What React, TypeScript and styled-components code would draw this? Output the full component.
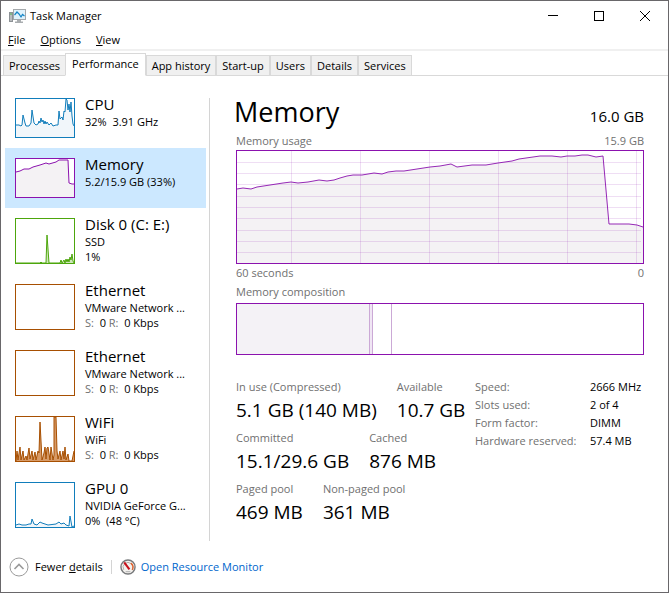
import React from 'react';
import styled, { createGlobalStyle } from 'styled-components';

const GlobalStyle = createGlobalStyle`
  *, *::before, *::after { box-sizing: border-box; }
  body {
    margin: 0;
    background: #fff;
    color: #000;
    font-family: 'Open Sans', 'Noto Sans', sans-serif;
    font-size: 11px;
    line-height: 16px;
  }
  button {
    font: inherit;
    color: inherit;
    border: 0;
    padding: 0;
    background: none;
    text-align: left;
  }
`;

const PURPLE = '#8b12ae';
const BLUE = '#117dbb';
const GREEN = '#4da60c';
const BROWN = '#a74f01';

const Window = styled.div`
  display: flex;
  flex-direction: column;
  min-height: 100vh;
  border: 1px solid #69676a;
`;

const TitleBar = styled.header`
  display: flex;
  align-items: center;
  height: 30px;
  padding-left: 8px;
`;

const Title = styled.h1`
  flex: 1;
  margin: 0 0 0 4px;
  font-size: 11px;
  font-weight: 400;
`;

const CaptionButton = styled.button`
  display: grid;
  place-items: center;
  width: 46px;
  height: 30px;
  &:hover { background: #e5e5e5; }
`;

const MenuBar = styled.nav`
  display: flex;
  gap: 15px;
  height: 20px;
  padding-left: 7px;
  border-bottom: 2px solid #f0f0f0;
`;

const MenuItem = styled.button`
  line-height: 18px;
`;

const TabStrip = styled.div`
  display: flex;
  align-items: flex-end;
  height: 25px;
  padding-left: 2px;
  box-shadow: inset 0 -1px #d9d9d9;
`;

const Tab = styled.button<{ $active?: boolean }>`
  height: ${p => (p.$active ? 23 : 21)}px;
  margin: ${p => (p.$active ? '0 0 0 -1px' : '0')};
  padding: ${p => (p.$active ? '0 6px 2px' : '0 5px')};
  border: 1px solid #d9d9d9;
  border-bottom-color: ${p => (p.$active ? '#fff' : '#d9d9d9')};
  background: ${p => (p.$active ? '#fff' : '#f0f0f0')};
  white-space: nowrap;
  & + & { border-left-width: ${p => (p.$active ? 1 : 0)}px; }
`;

const Body = styled.div`
  display: flex;
  flex: 1;
  padding: 12px 24px 0 4px;
`;

const Sidebar = styled.nav`
  flex: none;
  width: 201px;
`;

const Divider = styled.div`
  flex: none;
  width: 1px;
  margin: 10px 26px 0 3px;
  background: #d4d4d4;
`;

const Resource = styled.button<{ $active?: boolean }>`
  display: flex;
  gap: 10px;
  width: 100%;
  padding: 10px;
  background: ${p => (p.$active ? '#cce8ff' : 'transparent')};
`;

const Thumb = styled.svg<{ $color: string; $tall?: boolean }>`
  flex: none;
  width: 60px;
  height: ${p => (p.$tall ? 46 : 40)}px;
  border: 1px solid ${p => p.$color};
  background: #fff;
`;

const ResourceText = styled.span`
  display: block;
  min-width: 0;
  margin-top: -4px;
`;

const ResourceName = styled.span`
  display: block;
  font-size: 15px;
  line-height: 20px;
`;

const ResourceLine = styled.span`
  display: block;
  line-height: 15px;
  white-space: pre;
`;

const Muted = styled.span`
  color: #707070;
`;

const Main = styled.main`
  flex: 1;
  min-width: 0;
`;

const Heading = styled.div`
  display: flex;
  justify-content: space-between;
  align-items: baseline;
  height: 45px;
`;

const HeadingName = styled.h2`
  margin: 0 0 0 -2px;
  font-size: 27px;
  font-weight: 400;
  line-height: 48px;
`;

const Capacity = styled.span`
  font-size: 15px;
  line-height: 20px;
`;

const Caption = styled.div`
  display: flex;
  justify-content: space-between;
  height: 17px;
  color: #707070;
`;

const CompositionCaption = styled(Caption)`
  height: 19px;
  margin-top: 2px;
`;

const UsageChart = styled.svg`
  display: block;
  width: 100%;
  height: 114px;
  margin-bottom: 1px;
  border: 1px solid ${PURPLE};
`;

const Composition = styled.div`
  display: flex;
  height: 52px;
  border: 1px solid ${PURPLE};
`;

const Segment = styled.div<{ $share: number; $fill?: string }>`
  flex: ${p => p.$share} 0 0;
  background: ${p => p.$fill ?? '#fff'};
  & + & { border-left: 1px solid #cba9d6; }
`;

const Details = styled.div`
  display: flex;
  justify-content: space-between;
  padding-top: 24px;
`;

const StatRow = styled.dl`
  display: flex;
  gap: 20px;
  height: 51px;
  margin: 0;
  white-space: nowrap;
`;

const StatLabel = styled.dt`
  color: #707070;
`;

const StatValue = styled.dd`
  margin: 0;
  font-size: 19px;
  line-height: 30px;
`;

const Specs = styled.table`
  align-self: flex-start;
  width: 169px;
  border-collapse: collapse;
  white-space: nowrap;
  line-height: 18px;
  margin-top: -1px;
  th, td { padding: 0; text-align: left; font-weight: 400; }
  th { width: 115px; color: #707070; }
`;

const Footer = styled.footer`
  display: flex;
  align-items: center;
  height: 51px;
  padding: 1px 0 0 8px;
`;

const FooterButton = styled.button`
  display: flex;
  align-items: center;
  gap: 6px;
`;

const FooterRule = styled.span`
  width: 1px;
  height: 14px;
  margin: 0 8px;
  background: #d4d4d4;
`;

const FooterLink = styled.a`
  display: flex;
  align-items: center;
  gap: 5px;
  color: #0066cc;
  text-decoration: none;
`;

const TaskManagerIcon = () => (
  <svg width="17" height="16" viewBox="0 0 17 16" aria-hidden="true">
    <rect x="0.5" y="4.5" width="3" height="9" fill="#b9bcbf" stroke="#8d9296" />
    <path d="M1 6h2" stroke="#4caf50" />
    <path d="M8 12h4v1.500h2V15H6v-1.500h2z" fill="#a9adb0" />
    <rect x="4.500" y="1.500" width="12" height="10" fill="#dff2fc" stroke="#a4a8ab" />
    <path d="M5.500 7l2.500-3 2 2 2 3 1.500-2.500L15.500 8" fill="none" stroke="#1384c5" strokeWidth="1.200" />
  </svg>
);

const GaugeIcon = () => (
  <svg width="16" height="16" viewBox="0 0 17 17" aria-hidden="true">
    <circle cx="8.500" cy="8.500" r="7.500" fill="#f3f1ee" stroke="#77797b" strokeWidth="1.500" />
    <path d="M4 11.500A5.200 5.200 0 1 1 13 11.500" fill="none" stroke="#b0aaa5" />
    <path d="M11.500 4.300A5.200 5.200 0 0 1 13 11.500" fill="none" stroke="#e2602b" strokeWidth="1.500" />
    <path d="M4.500 3.500l5.500 7.500" stroke="#c8101a" strokeWidth="2.200" />
    <path d="M6 13.500h5" stroke="#aaa" />
  </svg>
);

const ChevronIcon = () => (
  <svg width="20" height="20" viewBox="0 0 20 20" fill="none" aria-hidden="true">
    <circle cx="10" cy="10" r="9" stroke="#9a9a9a" />
    <path d="M5.500 12L10 7.500l4.500 4.500" stroke="#9a9a9a" strokeWidth="1.600" />
  </svg>
);

type ResourceItem = {
  name: string;
  lines: React.ReactNode[];
  color: string;
  points?: string;
  fill?: string;
  tall?: boolean;
  active?: boolean;
};

const network = <><Muted>S:</Muted>{'  0 '}<Muted>R:</Muted>{'  0 Kbps'}</>;

const resources: ResourceItem[] = [
  {
    name: 'CPU', lines: ['32%  3.91 GHz'], color: BLUE, fill: '#f1f6fa',
    points: '0,26 3,26 5,27 6,26 7,16 9,24 10,27 13,27 15,24 16,11 18,24 20,26 22,25 23,22 24,24 25,19 26,23 27,21 28,25 29,22 30,25 31,23 33,26 35,24 37,27 40,26 42,26 43,12 44,20 46,18 47,21 48,12 49,13 50,0 51,1 52,11 53,5 54,13 55,3 56,17 57,25 58,27',
  },
  {
    name: 'Memory', lines: ['5.2/15.9 GB (33%)'], color: PURPLE, fill: '#f4f2f4', active: true,
    points: '0,13 4,12 8,10 13,10 17,8 24,6 30,4 33,5 40,3 43,1 52,1 53,24 56,25 58,25',
  },
  {
    name: 'Disk 0 (C: E:)', lines: ['SSD', '1%'], color: GREEN, fill: '#cfe6bb', tall: true,
    points: '0,44 24,44 25,43 26,44 30,44 31,16 33,44 44,44 45,41 46,44 48,41 49,44 50,40 51,43 52,40 53,43 54,38 55,41 56,35 57,42 58,44',
  },
  { name: 'Ethernet', lines: ['VMware Network ...', network], color: BROWN, tall: true },
  { name: 'Ethernet', lines: ['VMware Network ...', network], color: BROWN, tall: true },
  {
    name: 'WiFi', lines: ['WiFi', network], color: BROWN, fill: '#d79b68', tall: true,
    points: '0,44 1,34 2,43 4,30 5,43 7,34 8,43 10,39 11,43 13,31 14,42 16,34 17,43 19,35 20,43 22,34 23,36 24,5 26,43 28,36 29,30 30,42 31,31 32,30 34,43 35,30 37,43 38,38 38,0 40,0 41,34 42,42 44,34 45,43 47,34 48,42 49,30 50,43 52,37 53,44 56,44 58,34',
  },
  {
    name: 'GPU 0', lines: ['NVIDIA GeForce G...', '0%  (48 °C)'], color: BLUE, fill: '#f1f6fa', tall: true,
    points: '0,42 3,41 6,42 10,42 13,41 15,41 16,36 18,41 21,42 24,39 26,40 29,41 32,42 40,41 43,39 45,41 48,40 50,42 53,43 54,33 56,44 58,43',
  },
];

const usage =
  '0,38 6,37 14,38 20,36 33,34 46,32 54,31 61,32 71,31 82,29 90,30 97,29 103,27 110,25 116,24 125,24 137,22 145,23 151,21 159,20 167,20 180,18 193,16 203,15 214,13 220,16 235,14 249,14 261,12 275,10 282,8 303,5 315,5 324,6 330,5 338,5 345,4 351,4 359,6 366,5 372,73 392,73 400,74 406,76';

const stats = [
  [['In use (Compressed)', '5.1 GB (140 MB)'], ['Available', '10.7 GB']],
  [['Committed', '15.1/29.6 GB'], ['Cached', '876 MB']],
  [['Paged pool', '469 MB'], ['Non-paged pool', '361 MB']],
];

const specs = [
  ['Speed:', '2666 MHz'],
  ['Slots used:', '2 of 4'],
  ['Form factor:', 'DIMM'],
  ['Hardware reserved:', '57.4 MB'],
];

const tabs = ['Processes', 'Performance', 'App history', 'Start-up', 'Users', 'Details', 'Services'];

const ResourceButton = ({ item }: { item: ResourceItem }) => {
  const height = item.tall ? 44 : 38;
  return (
    <Resource $active={item.active} aria-current={item.active}>
      <Thumb $color={item.color} $tall={item.tall} viewBox={`0 0 58 ${height}`} aria-hidden="true">
        {item.points && (
          <>
            <polygon points={`0,${height} ${item.points} 58,${height}`} fill={item.fill} />
            <polyline points={item.points} fill="none" stroke={item.color} />
          </>
        )}
      </Thumb>
      <ResourceText>
        <ResourceName>{item.name}</ResourceName>
        {item.lines.map((line, i) => <ResourceLine key={i}>{line}</ResourceLine>)}
      </ResourceText>
    </Resource>
  );
};

export default function App() {
  return (
    <>
      <GlobalStyle />
      <Window>
        <TitleBar>
          <TaskManagerIcon />
          <Title>Task Manager</Title>
          <CaptionButton aria-label="Minimise">
            <svg width="10" height="10"><path d="M0 4.500h10" stroke="#000" /></svg>
          </CaptionButton>
          <CaptionButton aria-label="Maximise">
            <svg width="10" height="10"><rect x=".5" y=".5" width="9" height="9" fill="none" stroke="#000" /></svg>
          </CaptionButton>
          <CaptionButton aria-label="Close">
            <svg width="10" height="10"><path d="M0 0l10 10M10 0L0 10" stroke="#000" /></svg>
          </CaptionButton>
        </TitleBar>
        <MenuBar>
          <MenuItem><u>F</u>ile</MenuItem>
          <MenuItem><u>O</u>ptions</MenuItem>
          <MenuItem><u>V</u>iew</MenuItem>
        </MenuBar>
        <TabStrip role="tablist">
          {tabs.map(tab => (
            <Tab key={tab} role="tab" $active={tab === 'Performance'} aria-selected={tab === 'Performance'}>{tab}</Tab>
          ))}
        </TabStrip>
        <Body>
          <Sidebar>
            {resources.map((item, i) => <ResourceButton key={i} item={item} />)}
          </Sidebar>
          <Divider />
          <Main>
            <Heading>
              <HeadingName>Memory</HeadingName>
              <Capacity>16.0 GB</Capacity>
            </Heading>
            <Caption><span>Memory usage</span><span>15.9 GB</span></Caption>
            <UsageChart viewBox="0 0 406 112" preserveAspectRatio="none" role="img" aria-label="Memory usage">
              <polygon points={`0,112 ${usage} 406,112`} fill="#f4f2f4" />
              <g stroke={PURPLE} strokeOpacity="0.14" shapeRendering="crispEdges">
                {[54, 123, 192, 261, 330, 399].map(x => <path key={x} d={`M${x + 0.5} 0v112`} />)}
                {[11, 22, 33, 45, 56, 67, 79, 90, 101].map(y => <path key={y} d={`M0 ${y + 0.5}h404`} />)}
              </g>
              <polyline points={usage} fill="none" stroke={PURPLE} strokeOpacity="0.9" />
            </UsageChart>
            <Caption><span>60 seconds</span><span>0</span></Caption>
            <CompositionCaption>Memory composition</CompositionCaption>
            <Composition>
              <Segment $share={132} $fill="#f4f2f6" />
              <Segment $share={2} $fill="#f0e6f4" />
              <Segment $share={18} />
              <Segment $share={251} />
            </Composition>
            <Details>
              <div>
                {stats.map((row, i) => (
                  <StatRow key={i}>
                    {row.map(([label, value]) => (
                      <div key={label}>
                        <StatLabel>{label}</StatLabel>
                        <StatValue>{value}</StatValue>
                      </div>
                    ))}
                  </StatRow>
                ))}
              </div>
              <Specs>
                <tbody>
                  {specs.map(([label, value]) => (
                    <tr key={label}><th scope="row">{label}</th><td>{value}</td></tr>
                  ))}
                </tbody>
              </Specs>
            </Details>
          </Main>
        </Body>
        <Footer>
          <FooterButton><ChevronIcon /><span>Fewer <u>d</u>etails</span></FooterButton>
          <FooterRule />
          <FooterLink href="#resource-monitor"><GaugeIcon />Open Resource Monitor</FooterLink>
        </Footer>
      </Window>
    </>
  );
}
